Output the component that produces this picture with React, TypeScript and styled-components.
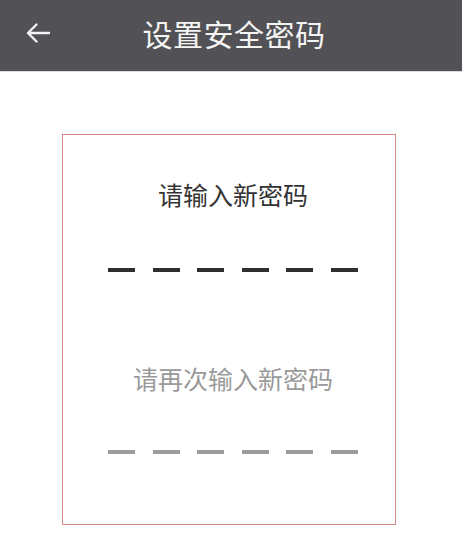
import React from "react";
import styled, { createGlobalStyle } from "styled-components";

const Global = createGlobalStyle`
  html, body { margin: 0; padding: 0; background: #ffffff; }
  body { font-family: "Noto Sans CJK SC", "Noto Sans", sans-serif; }
`;

const Page = styled.div`
  width: 462px;
  min-height: 548px;
  display: flex;
  flex-direction: column;
  background: #ffffff;
`;

const Header = styled.header`
  height: 72px;
  background: #525155;
  display: flex;
  align-items: center;
  position: relative;
  box-sizing: border-box;
  padding-bottom: 5px;
  border-bottom: 1px solid #dcdcdc;
`;

const BackButton = styled.div`
  position: absolute;
  left: 25px;
  top: 21px;
  width: 26px;
  height: 24px;
  display: flex;
  align-items: center;
  justify-content: center;
`;

const Title = styled.h1`
  margin: 0 0 0 6px;
  flex: 1;
  text-align: center;
  color: #f4f4f4;
  font-size: 30px;
  font-weight: 400;
  line-height: 40px;
  letter-spacing: 0.5px;
`;

const Body = styled.main`
  display: flex;
  padding: 62px 0 0 62px;
`;

const Card = styled.section`
  width: 334px;
  height: 391px;
  box-sizing: border-box;
  border: 1px solid #d58a85;
  display: flex;
  flex-direction: column;
  align-items: center;
  padding: 44px 0 0 8px;
`;

const Label = styled.div<{ $muted?: boolean }>`
  font-size: 25px;
  line-height: 30px;
  color: ${(p) => (p.$muted ? "#9a9a9a" : "#333333")};
`;

const Dashes = styled.div<{ $gap: number }>`
  display: flex;
  gap: 17.5px;
  margin-top: ${(p) => p.$gap}px;
`;

const Dash = styled.span<{ $muted?: boolean }>`
  display: block;
  width: 27px;
  height: 4px;
  background: ${(p) => (p.$muted ? "#9c9c9c" : "#2e2e2e")};
`;

const Spacer = styled.div`
  height: 91px;
`;

export default function App() {
  const six = [0, 1, 2, 3, 4, 5];
  return (
    <>
      <Global />
      <Page>
        <Header>
          <BackButton>
            <svg width="26" height="22" viewBox="0 0 26 22" fill="none">
              <path
                d="M24 11H3M11.5 2.5L3 11l8.5 8.5"
                stroke="#f4f4f4"
                strokeWidth="2.4"
                strokeLinecap="round"
                strokeLinejoin="round"
              />
            </svg>
          </BackButton>
          <Title>设置安全密码</Title>
        </Header>
        <Body>
          <Card>
            <Label>请输入新密码</Label>
            <Dashes $gap={59}>
              {six.map((i) => (
                <Dash key={i} />
              ))}
            </Dashes>
            <Spacer />
            <Label $muted>请再次输入新密码</Label>
            <Dashes $gap={57}>
              {six.map((i) => (
                <Dash key={i} $muted />
              ))}
            </Dashes>
          </Card>
        </Body>
      </Page>
    </>
  );
}
